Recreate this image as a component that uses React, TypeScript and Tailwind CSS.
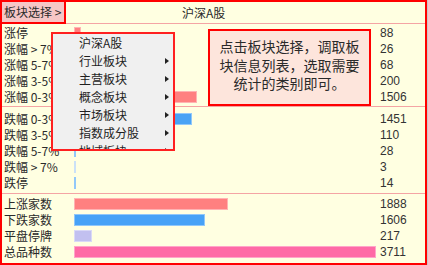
import React from "react";

const FONT = { fontFamily: '"Noto Sans CJK SC", "Noto Sans", sans-serif' };
const NUM = { fontFamily: '"Liberation Sans", Arial, sans-serif' };
const MAX = 3711;
const BAR_W = 302;

type Row = [string, number];

const sec1: Row[] = [
  ["涨停", 88],
  ["涨幅 > 7%", 26],
  ["涨幅 5-7%", 68],
  ["涨幅 3-5%", 200],
  ["涨幅 0-3%", 1506],
];
const sec2: Row[] = [
  ["跌幅 0-3%", 1451],
  ["跌幅 3-5%", 110],
  ["跌幅 5-7%", 28],
  ["跌幅 > 7%", 3],
  ["跌停", 14],
];
const sec3: [string, number, string][] = [
  ["上涨家数", 1888, "#ff8080"],
  ["下跌家数", 1606, "#47a2f7"],
  ["平盘停牌", 217, "#c2c0f0"],
  ["总品种数", 3711, "#ff6aa6"],
];

function DataRow({ label, value, color }: { label: string; value: number; color: string }) {
  const raw = (value / MAX) * BAR_W;
  const w = Math.max(1, Math.round(raw));
  const barColor = raw < 1 ? "#a8cdf2" : color;
  return (
    <div className="flex h-[16px] items-center">
      <div className="w-[72px] pl-[2px] text-[12px] leading-[16px] text-[#2a2a2a] whitespace-pre" style={FONT}>
        {label}
      </div>
      <div className="w-[306px] h-[12px] flex items-center">
        <div className="h-[12px] border border-white/40" style={{ width: w, background: barColor }} />
      </div>
      <div className="text-[12px] leading-[16px] text-[#333]" style={NUM}>
        {value}
      </div>
    </div>
  );
}

const menuItems: [string, boolean][] = [
  ["沪深A股", false],
  ["行业板块", true],
  ["主营板块", true],
  ["概念板块", true],
  ["市场板块", true],
  ["指数成分股", true],
  ["地域板块", true],
];

export default function App() {
  return (
    <div className="w-[428px] h-[265px] bg-[#c8c8c8]">
      <div className="relative w-[427px] h-[265px] border-2 border-[#ff0000] bg-[#ffffe1] overflow-hidden" style={FONT}>
        {/* header */}
        <div className="flex h-[22px] border-b border-[#f4a4a4]">
          <div className="relative z-10 -ml-[2px] -mt-[2px] h-[24px] w-[66px] shrink-0 border-2 border-[#ff0000] bg-[#f6c6c6] flex items-center pl-[2px] text-[12px] text-[#2a2a2a] whitespace-pre">
            板块选择 &gt;
          </div>
          <div className="flex items-center pl-[116px] text-[12px] text-[#2a2a2a]">沪深A股</div>
        </div>

        <div className="pt-[1px] pb-[1px] border-b border-[#f4a4a4]">
          {sec1.map(([l, v]) => (
            <DataRow key={l} label={l} value={v} color="#ff8080" />
          ))}
        </div>
        <div className="pt-[4px] pb-[2px] border-b border-[#f4a4a4]">
          {sec2.map(([l, v]) => (
            <DataRow key={l} label={l} value={v} color="#4aa3f5" />
          ))}
        </div>
        <div className="pt-[2px]">
          {sec3.map(([l, v, c]) => (
            <DataRow key={l} label={l} value={v} color={c} />
          ))}
        </div>

        {/* dropdown menu */}
        <div className="absolute left-[49px] top-[30px] w-[124px] h-[119px] border-2 border-[#ff2020] bg-[#f0f0f0] overflow-hidden">
          {menuItems.map(([t, sub]) => (
            <div key={t} className="flex h-[18px] items-center justify-between pl-[26px] pr-[4px] text-[12px] text-[#1e1e1e]">
              <span>{t}</span>
              {sub && (
                <svg width="4" height="6" viewBox="0 0 4 6">
                  <path d="M0 0 L4 3 L0 6 Z" fill="#222" />
                </svg>
              )}
            </div>
          ))}
        </div>

        {/* tooltip */}
        <div className="absolute left-[206px] top-[27px] w-[163px] h-[77px] border-2 border-[#ff0000] bg-[#fde5dc] pt-[6px] text-center text-[14px] leading-[18.5px] text-[#2a2a2a]">
          <div>点击板块选择，调取板</div>
          <div>块信息列表，选取需要</div>
          <div>统计的类别即可。</div>
        </div>
      </div>
    </div>
  );
}
